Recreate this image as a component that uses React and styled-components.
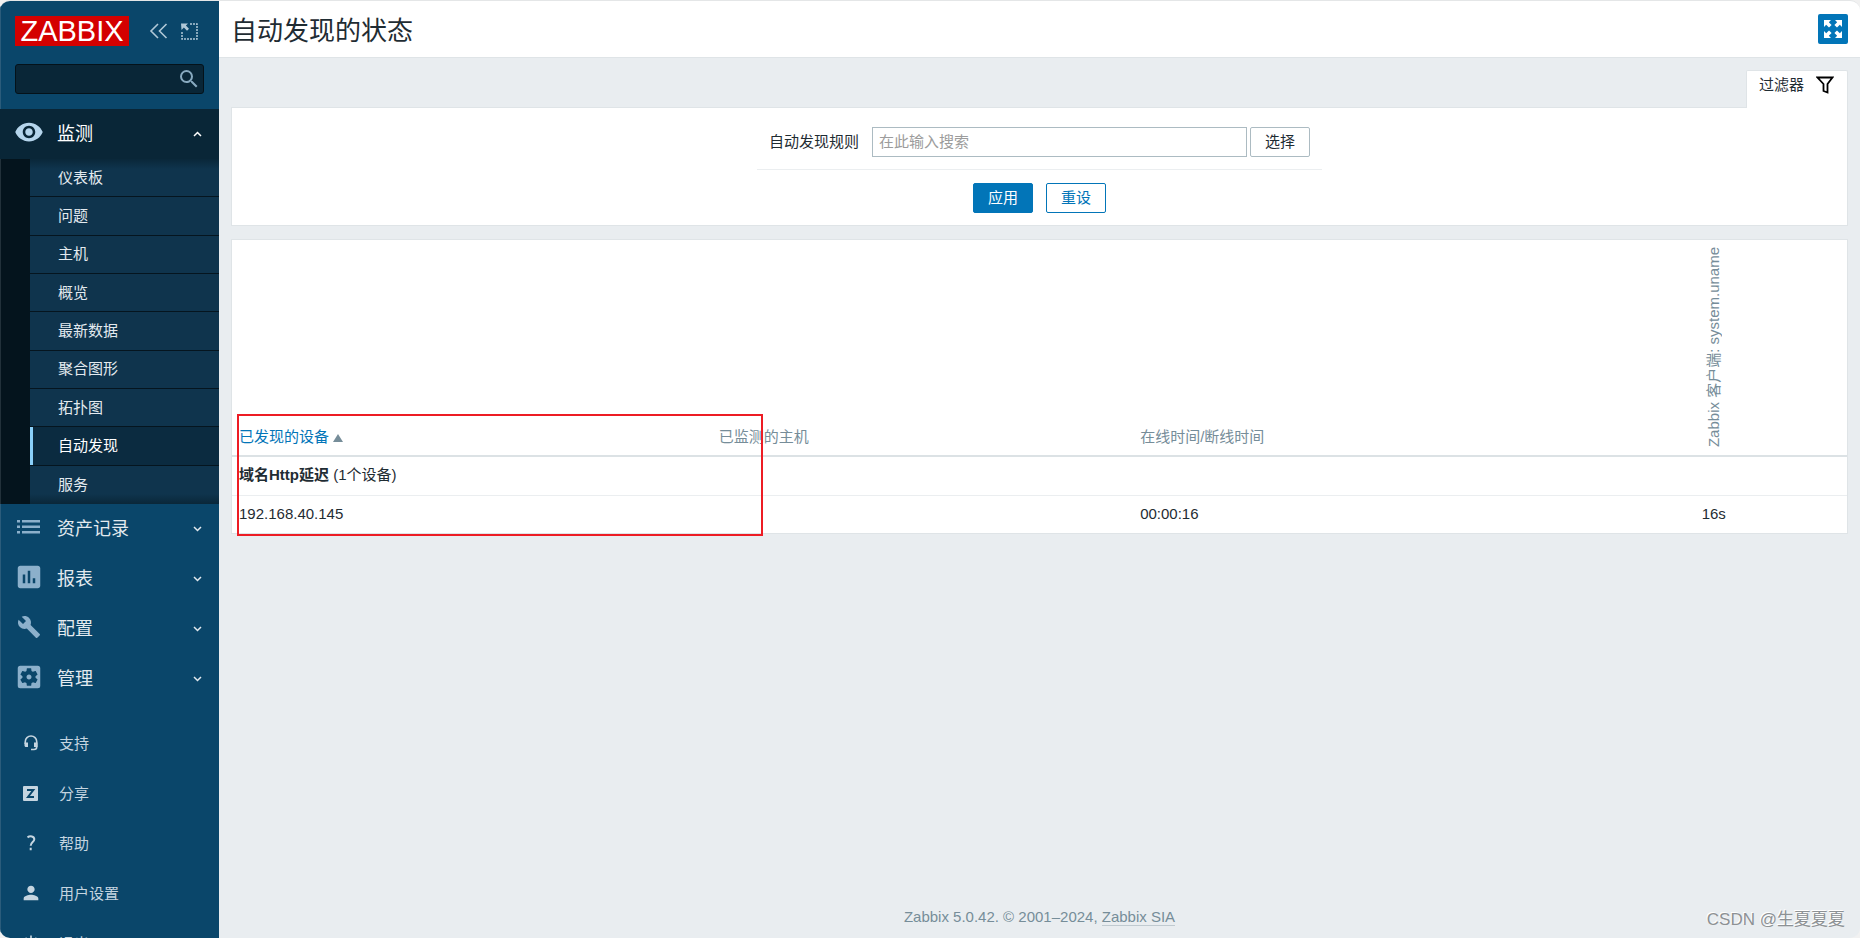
import React from "react";
import styled, { createGlobalStyle } from "styled-components";
import {
  MdAssessment,
  MdBuild,
  MdPerson,
  MdPowerSettingsNew,
  MdSearch,
  MdSettingsApplications,
  MdVisibility,
} from "react-icons/md";

const GlobalStyle = createGlobalStyle`
  * {
    box-sizing: border-box;
  }

  body {
    margin: 0;
    background-color: #f1f1f1;
  }

  body, input, button {
    font-family: "Liberation Sans", "Noto Sans CJK SC", sans-serif;
    font-size: 15px;
    line-height: 20px;
    color: #1f2c33;
  }

  a {
    color: inherit;
    text-decoration: none;
  }
`;

const Window = styled.div`
  position: relative;
  display: flex;
  height: 100vh;
  border-top: 1px solid #e4e6e7;
  border-radius: 10px;
  overflow: hidden;
  background-color: #e9edf0;
`;

const Sidebar = styled.aside`
  flex: none;
  width: 219px;
  height: 100%;
  overflow: hidden;
  background-color: #0a466a;
  box-shadow: inset 1px 0 #2b5c7b;
`;

const SidebarHead = styled.div`
  display: flex;
  align-items: center;
  padding: 15px 15px 0;
`;

const Logo = styled.a`
  flex: none;
  width: 114px;
  height: 30px;
  margin-right: 20px;
  background-color: #d40000;
  color: #fff;
  font-size: 29px;
  line-height: 31px;
  text-align: center;
`;

const SidebarButton = styled.button`
  flex: none;
  display: flex;
  padding: 0;
  border: none;
  background: none;
  color: #b0c8d7;
  cursor: pointer;

  & + & {
    margin-left: 13px;
  }
`;

const SearchForm = styled.form`
  display: flex;
  align-items: center;
  height: 30px;
  margin: 18px 15px 15px;
  padding-right: 2px;
  border: 1px solid #04121a;
  border-radius: 3px;
  background-color: #092637;

  input {
    flex: 1;
    min-width: 0;
    border: none;
    outline: none;
    background: none;
    color: #fff;
  }

  button {
    display: flex;
    padding: 0;
    border: none;
    background: none;
    color: #87a9bf;
    cursor: pointer;
  }
`;

const MenuList = styled.ul`
  margin: 0;
  padding: 0;
  list-style: none;
`;

const MenuLink = styled.a`
  display: flex;
  align-items: center;
  height: 50px;
  padding: 0 17px 0 14px;
  background-color: ${({ $open }) => ($open ? "#092637" : "transparent")};
  color: ${({ $open }) => ($open ? "#fff" : "#e3eaef")};
  font-size: 18px;
`;

const MenuIcon = styled.span`
  display: flex;
  justify-content: center;
  width: 30px;
  margin-right: 13px;
  padding-bottom: 4px;
  color: ${({ $open }) => ($open ? "#b5d5ec" : "#8cb0cb")};
`;

const MenuLabel = styled.span`
  flex: 1;
`;

const SubMenu = styled.ul`
  display: grid;
  grid-auto-rows: 1fr;
  min-height: 345px;
  margin: 0;
  padding: 0 0 0 30px;
  list-style: none;
  background-color: #04141d;
  box-shadow: inset 1px 0 #22313a;
`;

const SubItem = styled.li`
  display: flex;
  border-bottom: 1px solid #05151f;
  background-color: ${({ $selected }) => ($selected ? "#0b2b40" : "#0f344d")};

  &:first-child {
    background-image: linear-gradient(#0a2739, #0f344d 10px);
  }

  &:last-child {
    border-bottom: none;
    background-image: linear-gradient(to top, #0a2739, #0f344d 10px);
  }

  a {
    flex: 1;
    display: flex;
    align-items: center;
    padding-left: 25px;
    border-left: 3px solid
      ${({ $selected }) => ($selected ? "#8ad0fa" : "transparent")};
    color: ${({ $selected }) => ($selected ? "#fff" : "#e3eaef")};
  }
`;

const UserMenu = styled(MenuList)`
  margin-top: 14px;
`;

const UserLink = styled.a`
  display: flex;
  align-items: center;
  height: 50px;
  padding: 2px 0 0 19px;
  color: #c5d5e0;
`;

const UserIcon = styled.span`
  display: flex;
  justify-content: center;
  width: 23px;
  margin-right: 17px;
  padding-bottom: 2px;
`;

const Main = styled.div`
  flex: 1;
  min-width: 0;
  display: flex;
  flex-direction: column;
`;

const Header = styled.header`
  display: flex;
  align-items: center;
  justify-content: space-between;
  height: 57px;
  padding: 0 12px;
  border-bottom: 1px solid #dfe4e7;
  background-color: #fff;

  h1 {
    margin: 0;
    padding-top: 3px;
    font-size: 26px;
    font-weight: normal;
    line-height: 40px;
  }
`;

const KioskButton = styled.button`
  display: flex;
  align-items: center;
  justify-content: center;
  width: 30px;
  height: 30px;
  padding: 0;
  border: none;
  border-radius: 2px;
  background-color: #0275b8;
  color: #fff;
  cursor: pointer;
`;

const Content = styled.main`
  flex: 1;
  display: flex;
  flex-direction: column;
  padding: 12px 12px 0;
`;

const FilterTab = styled.a`
  z-index: 1;
  align-self: flex-end;
  display: flex;
  align-items: center;
  gap: 12px;
  height: 38px;
  margin-bottom: -1px;
  padding: 0 13px 9px 12px;
  border: 1px solid #dfe4e7;
  border-bottom: none;
  border-radius: 2px 2px 0 0;
  background-color: #fff;
`;

const Panel = styled.section`
  position: relative;
  border: 1px solid #dfe4e7;
  background-color: #fff;
`;

const FilterForm = styled.form`
  display: flex;
  flex-direction: column;
  width: 565px;
  margin: 0 auto;
`;

const FilterField = styled.div`
  display: flex;
  align-items: center;
  padding: 19px 12px 12px;
  border-bottom: 1px solid #ebeef0;

  label {
    margin-right: 13px;
  }

  input {
    flex: 1;
    min-width: 0;
    height: 30px;
    margin-right: 3px;
    padding: 0 6px 2px;
    border: 1px solid #acbbc2;
    outline: none;
  }

  input::placeholder {
    color: #9c9c9c;
    opacity: 1;
  }
`;

const FilterButtons = styled.div`
  display: flex;
  justify-content: center;
  gap: 13px;
  padding: 13px 0 12px;
`;

const borders = { primary: "#0275b8", outline: "#0275b8", grey: "#acbbc2" };
const texts = { primary: "#fff", outline: "#0275b8", grey: "#1f2c33" };

const Button = styled.button`
  height: 30px;
  padding: 0 14px;
  border: 1px solid ${({ $kind }) => borders[$kind]};
  border-radius: 2px;
  background-color: ${({ $kind }) => ($kind === "primary" ? "#0275b8" : "#fff")};
  color: ${({ $kind }) => texts[$kind]};
  cursor: pointer;
`;

const ResultPanel = styled(Panel)`
  margin-top: 13px;
`;

const Table = styled.table`
  width: 100%;
  table-layout: fixed;
  border-collapse: separate;
  border-spacing: 0;

  th {
    height: 217px;
    padding: 6px 7px 8px;
    border-bottom: 2px solid #dce2e5;
    color: #768d99;
    font-weight: normal;
    text-align: left;
    vertical-align: bottom;
  }

  th a {
    color: #0275b8;
  }

  td {
    height: 38px;
    padding: 0 7px 2px;
  }

  tr + tr td {
    border-top: 1px solid #ebeef0;
  }

  th:nth-child(4),
  td:nth-child(4) {
    text-align: center;
  }
`;

const Col = styled.col`
  width: ${({ $width }) => $width};
`;

const SortArrow = styled.span`
  display: inline-block;
  margin-left: 4px;
  border: 5px solid transparent;
  border-top: none;
  border-bottom: 8px solid #768d99;
`;

const VerticalText = styled.span`
  display: inline-block;
  writing-mode: vertical-rl;
  text-orientation: sideways;
  transform: rotate(180deg);
  white-space: nowrap;
  vertical-align: bottom;
`;

const Highlight = styled.div`
  position: absolute;
  top: 174px;
  left: 5px;
  width: 526px;
  height: 122px;
  border: 2px solid #ed1c24;
  pointer-events: none;
`;

const Footer = styled.footer`
  margin-top: auto;
  padding-bottom: 11px;
  text-align: center;
  color: #768d99;

  a {
    border-bottom: 1px solid #c0cad0;
  }
`;

const Watermark = styled.div`
  position: absolute;
  right: 15px;
  bottom: 6px;
  color: #8d9194;
  font-size: 17px;
  line-height: 24px;
  text-shadow: -1px -1px #fff;
`;

const CollapseIcon = () => (
  <svg width="19" height="16" viewBox="0 0 19 16" fill="none" stroke="currentColor" strokeWidth="1.6">
    <path d="M9 1L2 8l7 7M17.500 1l-7 7 7 7" />
  </svg>
);

const HideIcon = () => (
  <svg width="17" height="17" viewBox="0 0 17 17" fill="none" stroke="currentColor" strokeWidth="1.500">
    <path d="M9 1h7v15H1V9" strokeDasharray="2 1" />
    <path d="M0 .5h7L4.900 2.600 8 5.700 6 7.700 2.900 4.600.5 7z" fill="currentColor" stroke="none" />
  </svg>
);

const ListIcon = () => (
  <svg width="24" height="14" viewBox="0 0 24 14" fill="currentColor">
    <path d="M0 0h3v2.500H0zM5 0h18v2.500H5zM0 5.500h3V8H0zM5 5.500h18V8H5zM0 11h3v2.500H0zM5 11h18v2.500H5z" />
  </svg>
);

const Chevron = ({ up }) => (
  <svg width="9" height="6" viewBox="0 0 9 6" fill="none" stroke="currentColor" strokeWidth="1.500">
    <path d={up ? "M1 5l3.500-3.500L8 5" : "M1 1l3.500 3.500L8 1"} />
  </svg>
);

const SupportIcon = () => (
  <svg width="14" height="16" viewBox="0 0 14 16" fill="none" stroke="currentColor" strokeWidth="1.600">
    <path d="M1.300 9V6.500a5.700 5.500 0 0 1 11.400 0V12c0 1.800-1.200 2.500-2.700 2.500H7" />
    <path d="M.5 7.500H4V12H2C1 12 .5 11.300.5 10.500zM10 7.500h3.500V12H10z" fill="currentColor" stroke="none" />
  </svg>
);

const ShareIcon = () => (
  <svg width="15" height="15" viewBox="0 0 15 15">
    <rect width="15" height="15" rx="1" fill="currentColor" />
    <path d="M4 4h6.300l-5.300 7h6" fill="none" stroke="#0a466a" strokeWidth="2" />
  </svg>
);

const HelpIcon = () => (
  <svg width="10" height="16" viewBox="0 0 10 16" fill="none" stroke="currentColor" strokeWidth="2">
    <path d="M1.500 2.300C4 .6 8.300 1 8.300 4.300 8.300 7 4.700 7.200 4.700 10.700M4.700 12.800v2.400" />
  </svg>
);

const FullscreenIcon = () => (
  <svg width="18" height="18" viewBox="0 0 18 18" fill="currentColor">
    <path d="M0 0h7L4.800 2.200 7.600 5 5 7.600 2.200 4.800 0 7zM18 0v7l-2.200-2.200L13 7.600 10.400 5l2.800-2.800L11 0zM0 18v-7l2.200 2.200L5 10.400 7.600 13l-2.800 2.800L7 18zM18 18h-7l2.200-2.200-2.800-2.800 2.600-2.600 2.800 2.800L18 11z" />
  </svg>
);

const FilterIcon = () => (
  <svg width="18" height="18" viewBox="0 0 18 18" fill="none" stroke="#000" strokeWidth="1.800">
    <path d="M1.500 1.500h15L11.500 8v8.500l-4-1.500V8z" />
  </svg>
);

const subItems = [
  "仪表板",
  "问题",
  "主机",
  "概览",
  "最新数据",
  "聚合图形",
  "拓扑图",
  "自动发现",
  "服务",
];

const menu = [
  { label: "监测", icon: <MdVisibility size={30} />, items: subItems },
  { label: "资产记录", icon: <ListIcon /> },
  { label: "报表", icon: <MdAssessment size={30} /> },
  { label: "配置", icon: <MdBuild size={24} /> },
  { label: "管理", icon: <MdSettingsApplications size={30} /> },
];

const userMenu = [
  { label: "支持", icon: <SupportIcon /> },
  { label: "分享", icon: <ShareIcon /> },
  { label: "帮助", icon: <HelpIcon /> },
  { label: "用户设置", icon: <MdPerson size={22} /> },
  { label: "退出", icon: <MdPowerSettingsNew size={20} /> },
];

const App = () => {
  return (
    <>
      <GlobalStyle />
      <Window>
        <Sidebar>
          <SidebarHead>
            <Logo href="#">ZABBIX</Logo>
            <SidebarButton type="button" aria-label="折叠侧边栏">
              <CollapseIcon />
            </SidebarButton>
            <SidebarButton type="button" aria-label="隐藏侧边栏">
              <HideIcon />
            </SidebarButton>
          </SidebarHead>
          <SearchForm>
            <input type="text" name="search" aria-label="搜索" />
            <button type="submit" aria-label="搜索">
              <MdSearch size={24} />
            </button>
          </SearchForm>
          <nav>
            <MenuList>
              {menu.map(({ label, icon, items }) => (
                <li key={label}>
                  <MenuLink href="#" $open={!!items}>
                    <MenuIcon $open={!!items}>{icon}</MenuIcon>
                    <MenuLabel>{label}</MenuLabel>
                    <Chevron up={!!items} />
                  </MenuLink>
                  {items && (
                    <SubMenu>
                      {items.map((item) => (
                        <SubItem key={item} $selected={item === "自动发现"}>
                          <a href="#">{item}</a>
                        </SubItem>
                      ))}
                    </SubMenu>
                  )}
                </li>
              ))}
            </MenuList>
            <UserMenu>
              {userMenu.map(({ label, icon }) => (
                <li key={label}>
                  <UserLink href="#">
                    <UserIcon>{icon}</UserIcon>
                    {label}
                  </UserLink>
                </li>
              ))}
            </UserMenu>
          </nav>
        </Sidebar>
        <Main>
          <Header>
            <h1>自动发现的状态</h1>
            <KioskButton type="button" aria-label="全屏">
              <FullscreenIcon />
            </KioskButton>
          </Header>
          <Content>
            <FilterTab href="#">
              过滤器
              <FilterIcon />
            </FilterTab>
            <Panel>
              <FilterForm>
                <FilterField>
                  <label htmlFor="drules">自动发现规则</label>
                  <input id="drules" type="text" placeholder="在此输入搜索" />
                  <Button type="button" $kind="grey">
                    选择
                  </Button>
                </FilterField>
                <FilterButtons>
                  <Button type="submit" $kind="primary">
                    应用
                  </Button>
                  <Button type="reset" $kind="outline">
                    重设
                  </Button>
                </FilterButtons>
              </FilterForm>
            </Panel>
            <ResultPanel>
              <Table>
                <colgroup>
                  <Col $width="29.7%" />
                  <Col $width="26.1%" />
                  <Col $width="27.7%" />
                  <Col $width="16.5%" />
                </colgroup>
                <thead>
                  <tr>
                    <th>
                      <a href="#">
                        已发现的设备
                        <SortArrow />
                      </a>
                    </th>
                    <th>已监测的主机</th>
                    <th>在线时间/断线时间</th>
                    <th>
                      <VerticalText>Zabbix 客户端: system.uname</VerticalText>
                    </th>
                  </tr>
                </thead>
                <tbody>
                  <tr>
                    <td colSpan={4}>
                      <b>域名Http延迟</b> (1个设备)
                    </td>
                  </tr>
                  <tr>
                    <td>192.168.40.145</td>
                    <td />
                    <td>00:00:16</td>
                    <td>16s</td>
                  </tr>
                </tbody>
              </Table>
              <Highlight />
            </ResultPanel>
            <Footer>
              Zabbix 5.0.42. © 2001–2024, <a href="#">Zabbix SIA</a>
            </Footer>
          </Content>
        </Main>
        <Watermark>CSDN @生夏夏夏</Watermark>
      </Window>
    </>
  );
};

export default App;
